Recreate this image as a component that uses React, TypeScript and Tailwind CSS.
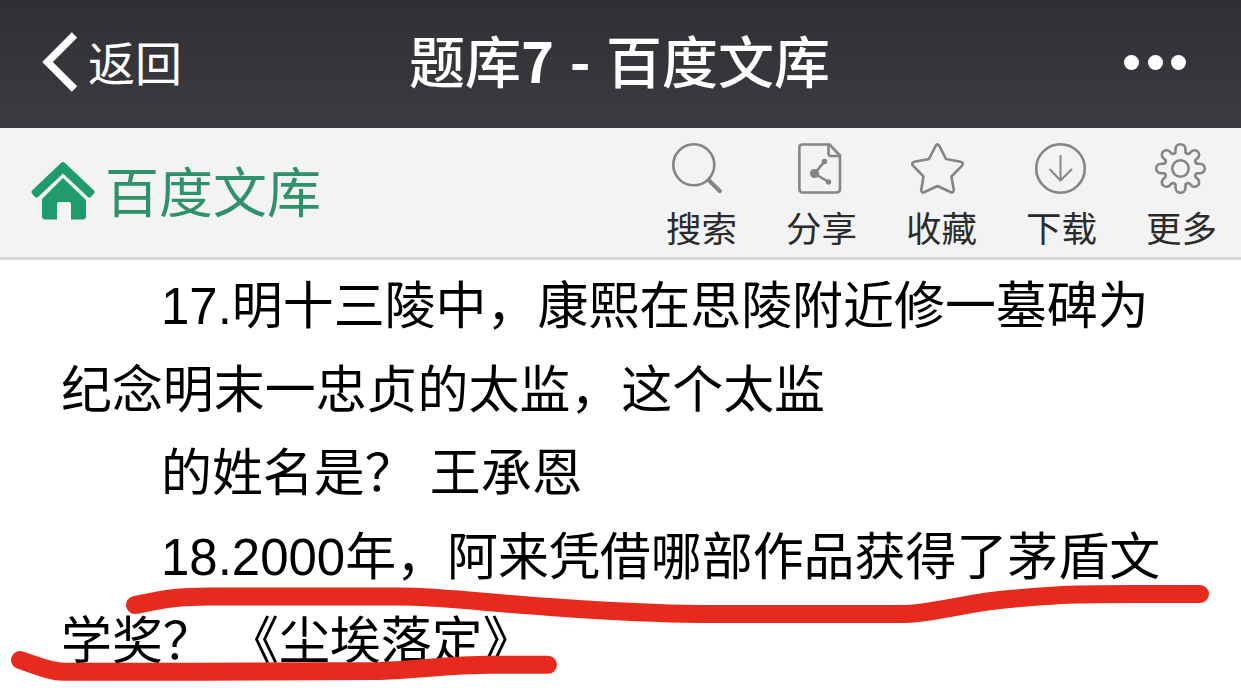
import type { ReactNode } from "react";

interface Tool {
  label: string;
  icon: ReactNode;
}

const tools: Tool[] = [
  {
    label: "搜索",
    icon: (
      <>
        <circle cx="17.8" cy="21.8" r="20.5" />
        <path d="M32.8 37.3L43.8 48" strokeWidth="4.2" />
      </>
    ),
  },
  {
    label: "分享",
    icon: (
      <>
        <path d="M6.5 1.5H33.5L44 12.5V46Q44 49.5 40.5 49.5H6.9Q3.4 49.5 3.4 46V4.5Q3.4 1.5 6.5 1.5Z" />
        <path d="M32.5 1.5V10.5Q32.5 13 35 13H44" />
        <path d="M28.5 18.5L18.5 30.5L32.5 39" strokeWidth="2.6" />
        <g fill="#858585" stroke="none">
          <circle cx="18.5" cy="30.5" r="4.6" />
          <circle cx="28.5" cy="18.5" r="2.7" />
          <circle cx="32.5" cy="39" r="2.7" />
        </g>
      </>
    ),
  },
  {
    label: "收藏",
    icon: (
      <path d="M19.8 2.7Q21.5 0 23.2 2.7L30 16L44.5 18.7Q48.3 19.8 46 22.6L35.5 33.5L37.8 47Q37.5 50.5 34.3 49L21.5 43L8.7 49Q5.5 50.5 5.2 47L7.5 33.5L-3 22.6Q-5.3 19.8 -1.5 18.7L13 16Z" />
    ),
  },
  {
    label: "下载",
    icon: (
      <>
        <circle cx="24.5" cy="25.5" r="24.3" />
        <path d="M24.5 13V37.5M14 26.5L24.5 37.5L35.5 26.5" strokeWidth="2" />
      </>
    ),
  },
  {
    label: "更多",
    icon: (
      <>
        <circle cx="24.5" cy="25.5" r="8.2" />
        <path d="M19.5 9.5V6.5C19.5-.5 29.5-.5 29.5 6.5V9.5Q31 11.8 33.5 10.5L35 8.8C40 4.2 46 10.8 41.7 15L39.5 17Q38.5 19.5 41 20.8H43.5C50.5 20.8 50.5 30.2 43.5 30.2H41Q38.5 31.5 39.5 34L41.7 36C46 40.2 40 46.8 35 42.2L33.5 40.5Q31 39.2 29.5 41.5V44.5C29.5 51.5 19.5 51.5 19.5 44.5V41.5Q18 39.2 15.5 40.5L14 42.2C9 46.8 3 40.2 7.3 36L9.5 34Q10.5 31.5 8 30.2H5.5C-1.5 30.2-1.5 20.8 5.5 20.8H8Q10.5 19.5 9.5 17L7.3 15C3 10.8 9 4.2 14 8.8L15.5 10.5Q18 11.8 19.5 9.5Z" />
      </>
    ),
  },
];

const lines = [
  { text: "17.明十三陵中，康熙在思陵附近修一墓碑为", indent: true },
  { text: "纪念明末一忠贞的太监，这个太监", indent: false },
  { text: "的姓名是？ 王承恩", indent: true },
  { text: "18.2000年，阿来凭借哪部作品获得了茅盾文", indent: true },
  { text: "学奖？ 《尘埃落定》", indent: false },
];

function NavBar() {
  return (
    <header className="grid h-32 grid-cols-[1fr_auto_1fr] items-center bg-linear-to-b from-[#302f34] to-[#3c3b40] text-white">
      <button className="flex items-center gap-2.5 pl-[42px]">
        <svg width="36" height="60" viewBox="0 0 36 60" fill="none" className="-mt-1">
          <path d="M32.5 3L5.5 30L32.5 57" stroke="white" strokeWidth="7.5" />
        </svg>
        <span className="text-[47px] leading-none">返回</span>
      </button>
      <h1 className="pr-0.5 pb-2.5 font-['Noto_Sans_CJK_SC',sans-serif] text-[56px] leading-none font-medium [word-spacing:3px] whitespace-pre">
        题库<span className="font-bold">7 - </span>百度文库
      </h1>
      <button className="-mt-1 flex justify-end gap-[8.5px] pr-[55px]">
        <span className="size-[15px] rounded-full bg-white" />
        <span className="size-[15px] rounded-full bg-white" />
        <span className="size-[15px] rounded-full bg-white" />
      </button>
    </header>
  );
}

function Toolbar() {
  return (
    <div className="flex h-[132px] justify-between border-b-3 border-[#d7d7d7] bg-[#f3f3f3]">
      <a className="flex items-center gap-2.5 pl-[31px] text-[#2f9169]">
        <svg width="64" height="58" viewBox="0 0 64 58" fill="#1f9c6b" className="-mt-1">
          <path d="M30 1Q32 -1 34 1L63 28.5Q64 30 63 31.5L60 35Q58.5 36 57 35L32 11.5L7 35Q5.5 36 4 35L1 31.5Q0 30 1 28.5Z" />
          <path d="M32 16L55 38V54.5Q55 57.5 52 57.5H40V42Q40 40 38 40H28Q26 40 26 42V57.5H14Q11 57.5 11 54.5V37Z" />
        </svg>
        <span className="pt-0.5 text-[54px] leading-none">百度文库</span>
      </a>
      <nav className="flex">
        {tools.map(tool => (
          <button
            key={tool.label}
            className="flex w-[120px] flex-col items-start pt-[15px] pl-[25px]"
          >
            <svg
              width="52"
              height="52"
              viewBox="0 0 52 52"
              fill="none"
              stroke="#858585"
              strokeWidth="2.6"
              strokeLinecap="round"
              strokeLinejoin="round"
              className="ml-2.5 overflow-visible"
            >
              {tool.icon}
            </svg>
            <span className="mt-[18px] text-[35.5px] leading-none text-[#2b2b2b]">
              {tool.label}
            </span>
          </button>
        ))}
      </nav>
    </div>
  );
}

export default function App() {
  return (
    <div className="relative h-[692px] w-[1241px] overflow-hidden bg-white font-['Liberation_Sans','Noto_Sans_CJK_SC',sans-serif]">
      <NavBar />
      <Toolbar />
      <main className="pt-[5px] pl-[61px] text-[50.95px] leading-[83.7px] whitespace-pre text-black">
        {lines.map(line => (
          <p key={line.text} className={line.indent ? "pl-[100px]" : ""}>
            {line.text}
          </p>
        ))}
      </main>

      {/* red marker strokes over the text */}
      <svg
        className="pointer-events-none absolute inset-0"
        width="1241"
        height="692"
        fill="none"
        stroke="#e62b1e"
        strokeWidth="18"
        strokeLinecap="round"
        strokeLinejoin="round"
      >
        <path d="M135 605C165 599 175 596.5 210 596.5H400C440 596.5 490 603 550 607C600 610.5 640 613.5 700 614H900C935 614 965 602 1015 598.5C1065 594 1090 594 1131 594H1200" />
        <path d="M20 660C38 666 50 671.8 64 671.8H200C270 671 330 671.5 380 671C420 669.5 450 664.8 490 664.8H548" />
      </svg>
    </div>
  );
}
